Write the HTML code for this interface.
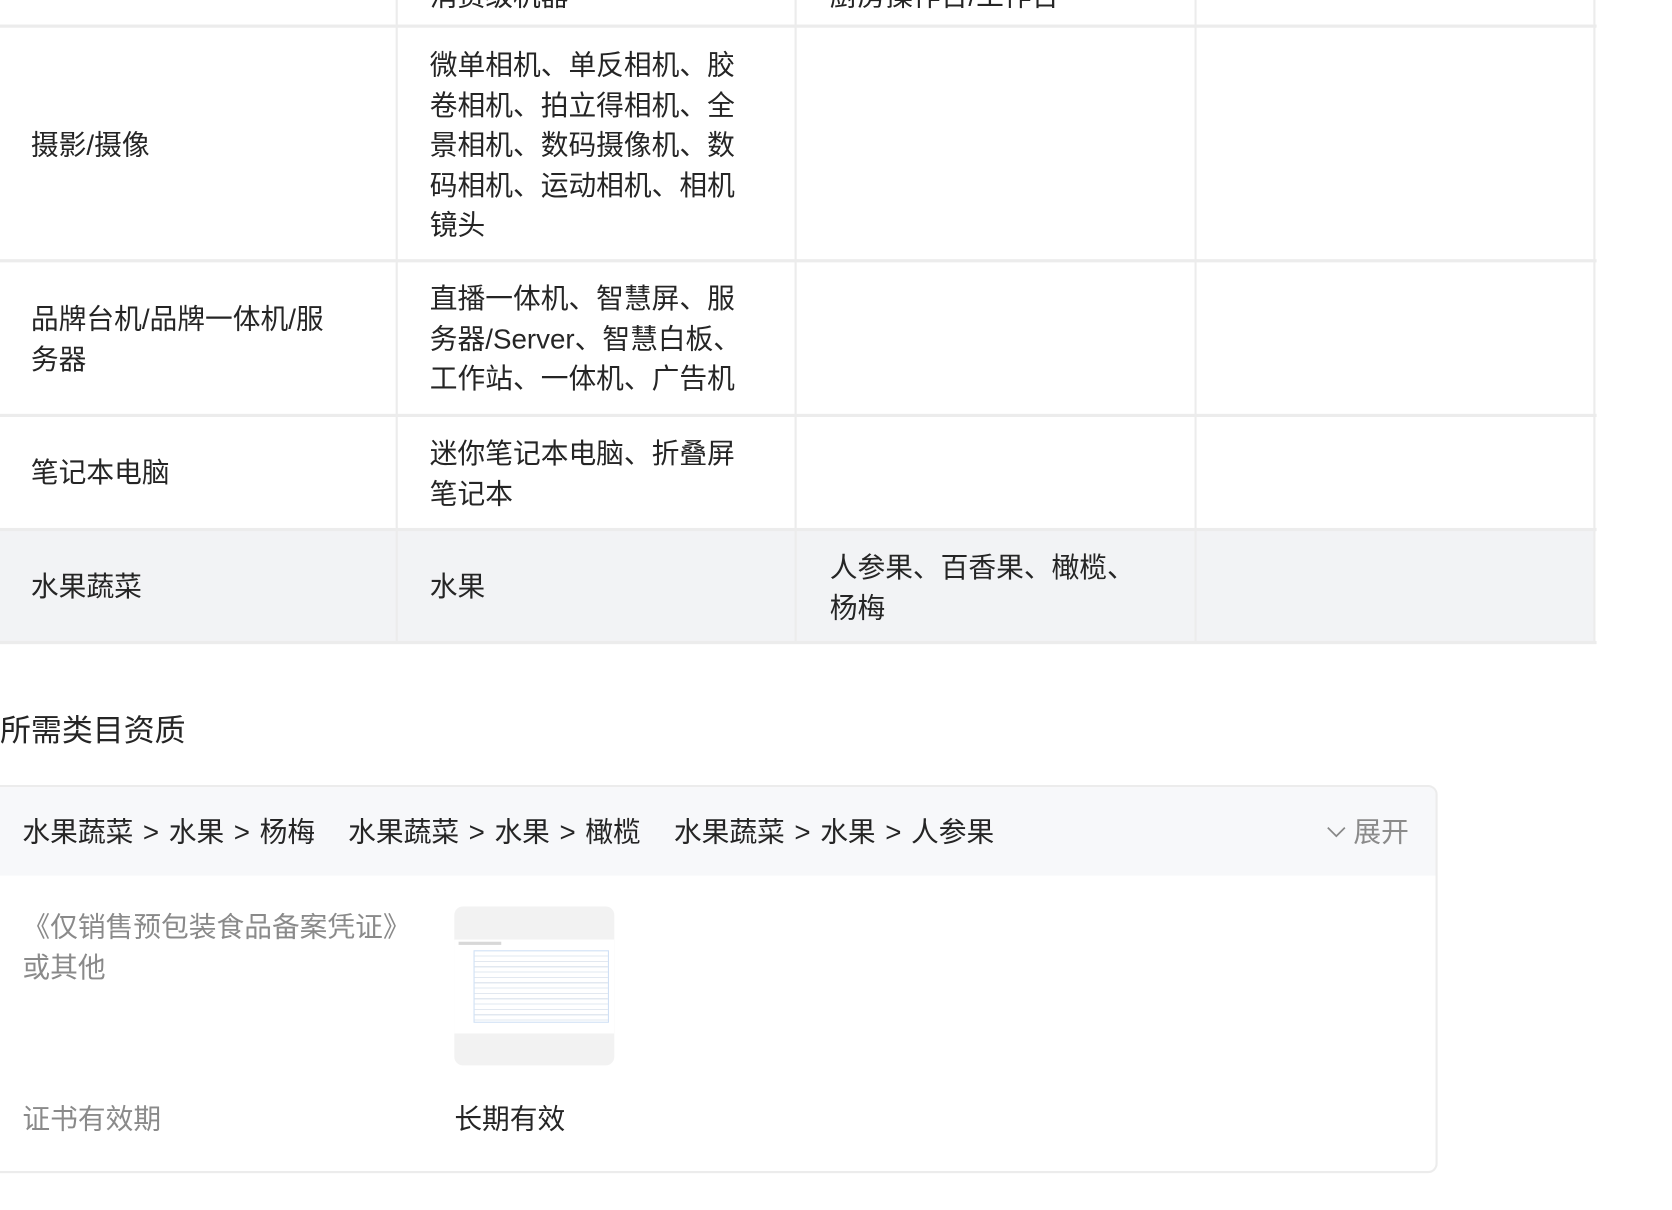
<!DOCTYPE html>
<html><head><meta charset="utf-8"><style>
html,body{margin:0;padding:0;background:#fff;width:1672px;height:1208px;overflow:hidden}
#w{position:absolute;left:0;top:0;width:1570px;height:1135px;transform:scale(1.0665);transform-origin:0 0;font-family:"Liberation Sans","Noto Sans CJK SC",sans-serif;color:#252525;font-size:26px}
.a{position:absolute;white-space:nowrap}
.vl{position:absolute;width:2px;background:#ececec}
.hl{position:absolute;height:3px;background:#ececec;left:0;width:1497px}
.t{position:absolute;line-height:37.5px;white-space:nowrap;margin-top:2px}
.g{color:#8a8a8a}
.s{padding:0 9px}
.gap{display:inline-block;width:31px}
</style></head><body><div id="w">
<div style="position:absolute;left:0;top:496px;width:1496px;height:107px;background:#f2f3f5"></div>
<div class="vl" style="left:371px;top:0;height:603px"></div>
<div class="vl" style="left:745px;top:0;height:603px"></div>
<div class="vl" style="left:1120px;top:0;height:603px"></div>
<div class="vl" style="left:1494px;top:0;height:603px"></div>
<div class="hl" style="top:23px"></div>
<div class="hl" style="top:243px"></div>
<div class="hl" style="top:388px"></div>
<div class="hl" style="top:495px"></div>
<div class="hl" style="top:601px"></div>
<div class="t" style="left:403px;top:-24px">消费级机器</div>
<div class="t" style="left:778px;top:-24px">厨房操作台/工作台</div>
<div class="t" style="left:29px;top:116px">摄影/摄像</div>
<div class="t" style="left:403px;top:41px">微单相机、单反相机、胶<br>卷相机、拍立得相机、全<br>景相机、数码摄像机、数<br>码相机、运动相机、相机<br>镜头</div>
<div class="t" style="left:29px;top:279px">品牌台机/品牌一体机/服<br>务器</div>
<div class="t" style="left:403px;top:260px">直播一体机、智慧屏、服<br>务器/Server、智慧白板、<br>工作站、一体机、广告机</div>
<div class="t" style="left:29px;top:423px">笔记本电脑</div>
<div class="t" style="left:403px;top:405px">迷你笔记本电脑、折叠屏<br>笔记本</div>
<div class="t" style="left:29px;top:530px">水果蔬菜</div>
<div class="t" style="left:403px;top:530px">水果</div>
<div class="t" style="left:778px;top:512px">人参果、百香果、橄榄、<br>杨梅</div>
<div class="a" style="left:0;top:666px;font-size:29px;line-height:40px">所需类目资质</div>
<div style="position:absolute;left:-10px;top:736px;width:1354px;height:360px;border:2px solid #ececec;border-radius:9px;overflow:hidden">
<div style="position:absolute;left:0;top:0;right:0;height:83px;background:#f7f8fa"></div>
</div>
<div class="t" style="left:21px;top:760px">水果蔬菜<span class="s">&gt;</span>水果<span class="s">&gt;</span>杨梅<span class="gap"></span>水果蔬菜<span class="s">&gt;</span>水果<span class="s">&gt;</span>橄榄<span class="gap"></span>水果蔬菜<span class="s">&gt;</span>水果<span class="s">&gt;</span>人参果</div>
<svg style="position:absolute;left:1243px;top:773px" width="20" height="14"><path d="M2 3 L10 11 L18 3" fill="none" stroke="#888" stroke-width="1.6"/></svg>
<div class="t g" style="left:1269px;top:760px">展开</div>
<div class="t g" style="left:21px;top:849px">《仅销售预包装食品备案凭证》<br>或其他</div>
<div style="position:absolute;left:426px;top:850px;width:150px;height:149px;background:#f2f2f2;border-radius:8px;overflow:hidden">
<div style="position:absolute;left:0;top:31px;width:150px;height:88px;background:#fff">
<div style="position:absolute;left:4px;top:2px;width:40px;height:3px;background:#d8d8d8"></div>
<div style="position:absolute;left:18px;top:10px;width:125px;height:66px;border:1px solid #cfe0f5;background:repeating-linear-gradient(#fff 0 4px,#e2e8f0 4px 5px)"></div>
</div></div>
<div class="t g" style="left:21px;top:1029px">证书有效期</div>
<div class="t" style="left:426px;top:1029px">长期有效</div>
</div></body></html>
